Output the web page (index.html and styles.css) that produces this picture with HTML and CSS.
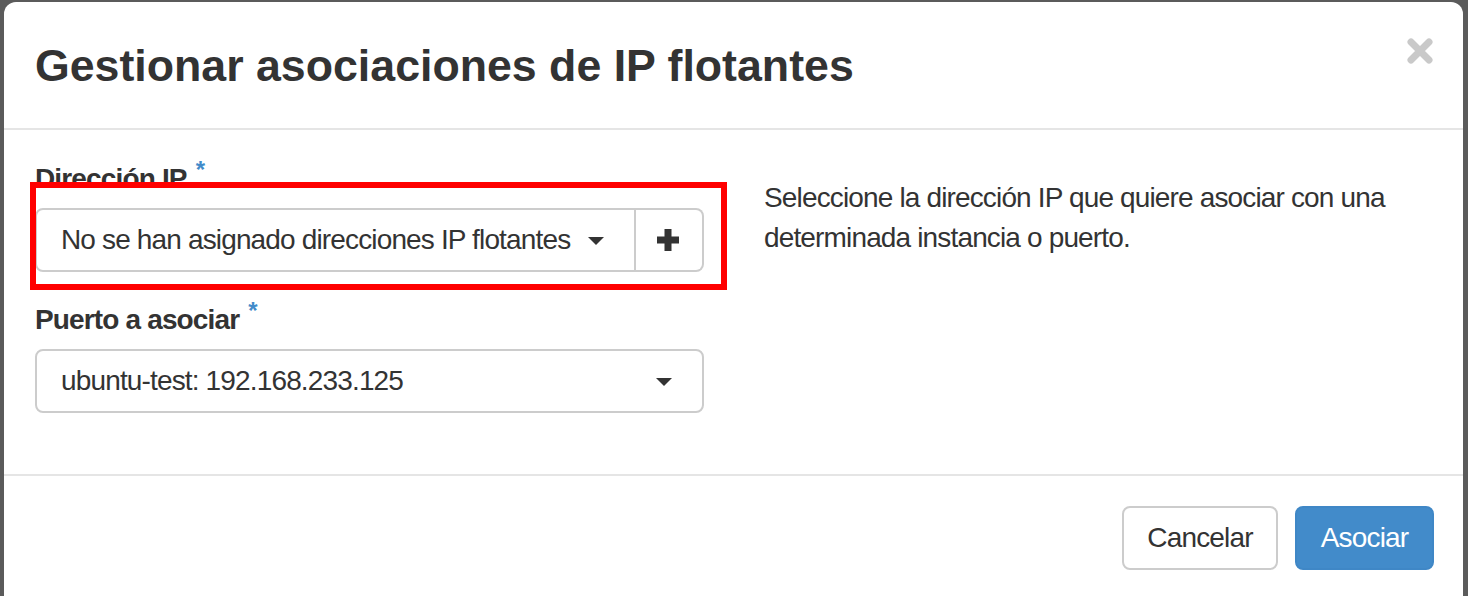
FILE: index.html
```html
<!DOCTYPE html>
<html lang="es">
<head>
<meta charset="utf-8">
<title>Gestionar asociaciones de IP flotantes</title>
<link rel="stylesheet" href="styles.css">
</head>
<body>
<div class="modal">
  <div class="modal-header">
    <h3 class="modal-title">Gestionar asociaciones de IP flotantes</h3>
    <button class="close" aria-label="Cerrar">
      <svg width="26" height="26" viewBox="0 0 26 26"><path d="M4 4 L22 22 M22 4 L4 22" stroke="#c9c9c9" stroke-width="7" stroke-linecap="round"/></svg>
    </button>
  </div>
  <div class="modal-body">
    <div class="col-left">
      <div class="form-group">
        <label class="label">Dirección IP<span class="req">*</span></label>
        <div class="input-group">
          <div class="select select-grouped">
            <span class="value">No se han asignado direcciones IP flotantes</span>
            <span class="caret"></span>
          </div>
          <button class="addon" aria-label="Añadir">
            <svg width="22" height="22" viewBox="0 0 22 22"><path d="M7.5 0h7v7.5h7.5v7h-7.5v7.5h-7v-7.5h-7.5v-7h7.5z" fill="#333"/></svg>
          </button>
        </div>
        <div class="highlight"></div>
      </div>
      <div class="form-group">
        <label class="label">Puerto a asociar<span class="req">*</span></label>
        <div class="select">
          <span class="value">ubuntu-test: 192.168.233.125</span>
          <span class="caret"></span>
        </div>
      </div>
    </div>
    <div class="col-right">
      <p class="help">Seleccione la dirección IP que quiere asociar con una determinada instancia o puerto.</p>
    </div>
  </div>
  <div class="modal-footer">
    <button class="btn btn-default">Cancelar</button>
    <button class="btn btn-primary">Asociar</button>
  </div>
</div>
</body>
</html>
```

FILE: styles.css
```css
html, body {
  margin: 0;
  padding: 0;
  height: 100%;
  overflow: hidden;
}
body {
  background: #5b5b5b;
  font-family: "Liberation Sans", Arial, Helvetica, sans-serif;
  color: #333;
  font-size: 28px;
  line-height: 40px;
  letter-spacing: -0.85px;
  padding: 2px 5px 0 4px;
  box-sizing: border-box;
}
.modal {
  background: #fff;
  border-radius: 12px 12px 0 0;
  height: 620px;
}
.modal-header {
  height: 126px;
  border-bottom: 2px solid #e5e5e5;
  display: flex;
  align-items: center;
  justify-content: space-between;
  padding: 0 30px 0 31px;
  box-sizing: content-box;
}
.modal-title {
  margin: 0;
  font-size: 44.7px;
  font-weight: bold;
  letter-spacing: 0;
  line-height: 52px;
  color: #333;
  position: relative;
  top: 1px;
}
.close {
  border: 0;
  background: none;
  padding: 0;
  width: 26px;
  height: 26px;
  align-self: flex-start;
  margin-top: 36px;
  cursor: pointer;
}
.close svg { display: block; }
.modal-body {
  display: grid;
  grid-template-columns: 669px 668px;
  column-gap: 60px;
  padding: 29px 31px 61px 31px;
}
.form-group {
  position: relative;
  margin-bottom: 28px;
}
.form-group:last-child { margin-bottom: 0; }
.label {
  display: block;
  font-weight: bold;
  margin-bottom: 9px;
  height: 40px;
}
.req {
  color: #428bca;
  font-size: 24px;
  vertical-align: top;
  margin-left: 9px;
  position: relative;
  top: -9px;
}
.input-group {
  display: flex;
  height: 64px;
}
.select {
  height: 64px;
  box-sizing: border-box;
  border: 2px solid #ccc;
  border-radius: 8px;
  display: flex;
  align-items: center;
  justify-content: space-between;
  padding: 0 30px 0 24px;
  background: #fff;
}
.value {
  white-space: nowrap;
}
.select-grouped {
  flex: 1;
  border-radius: 8px 0 0 8px;
  justify-content: flex-start;
  gap: 18px;
}
.caret {
  width: 0;
  height: 0;
  border-top: 8px solid #333;
  border-left: 8px solid transparent;
  border-right: 8px solid transparent;
  margin-top: 2px;
}
.addon {
  width: 71px;
  height: 64px;
  box-sizing: border-box;
  border: 2px solid #ccc;
  border-left: 0;
  border-radius: 0 8px 8px 0;
  background: #fff;
  display: flex;
  align-items: center;
  justify-content: center;
  padding: 0;
}
.addon svg { display: block; margin-left: -2px; }
.highlight {
  position: absolute;
  left: -5px;
  top: 23px;
  width: 697px;
  height: 108px;
  box-sizing: border-box;
  border: 6px solid #f00;
  pointer-events: none;
}
.help {
  margin: 19px 0 0 0;
}
.modal-footer {
  border-top: 2px solid #e5e5e5;
  display: flex;
  justify-content: flex-end;
  gap: 17px;
  padding: 30px 29px 0 0;
}
.btn {
  height: 64px;
  box-sizing: border-box;
  font-family: inherit;
  font-size: 28px;
  letter-spacing: -0.85px;
  line-height: 40px;
  border-radius: 8px;
  border: 2px solid #ccc;
  padding: 0;
}
.btn-default {
  background: #fff;
  color: #333;
  width: 156px;
}
.btn-primary {
  background: #428bca;
  border-color: #3f87c6;
  color: #fff;
  width: 139px;
}
```
